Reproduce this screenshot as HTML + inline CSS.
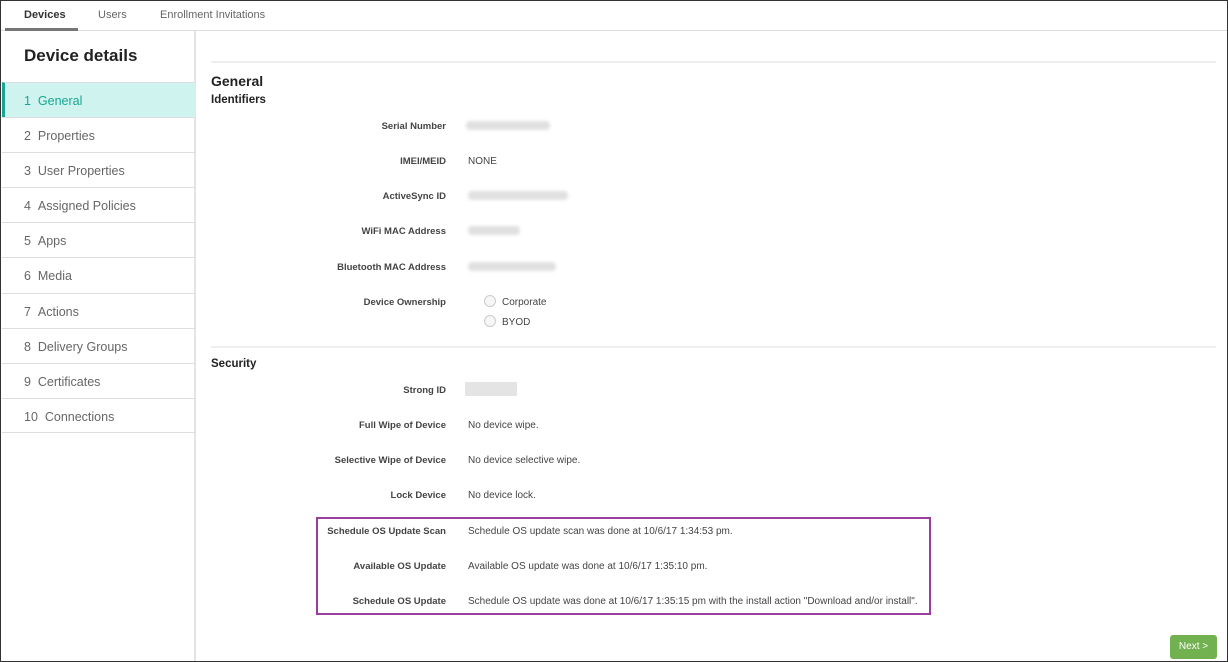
<!DOCTYPE html>
<html><head><meta charset="utf-8"><style>
*{box-sizing:border-box;margin:0;padding:0}
body{width:1228px;height:662px;overflow:hidden;font-family:"Liberation Sans",sans-serif;color:#333;background:#fff;position:relative}
.frame{position:absolute;left:0;top:0;width:1228px;height:662px;border:1px solid #333;pointer-events:none;z-index:10}
.tabs{position:absolute;left:0;top:0;width:1228px;height:31px;border-bottom:1px solid #ddd}
.tab{position:absolute;top:9px;font-size:11px;color:#666}
.tabsel{position:absolute;left:5px;top:28px;width:73px;height:3px;background:#777}
.side{position:absolute;left:0;top:31px;width:196px;height:631px;border-right:2px solid #e4e4e4}
.side h1{position:absolute;left:24px;top:15px;font-size:17px;font-weight:bold;color:#222}
.item{position:absolute;left:2px;width:194px;height:35px;border-top:1px solid #ddd;font-size:12.5px;color:#666;padding:11px 0 0 22px}
.item.sel{background:#cff3ee;color:#1aa592;border-left:3px solid #1aa592;padding-left:19px}
.hr{position:absolute;left:211px;width:1005px;height:2px;background:#eee}
.lab{position:absolute;right:782px;font-size:9.5px;font-weight:bold;color:#444;white-space:nowrap;margin-top:1px}
.val{position:absolute;left:468px;font-size:10px;color:#444;white-space:nowrap;margin-top:1px}
.blur{position:absolute;height:9px;background:#e0e0e0;border-radius:4px;filter:blur(1.5px)}
.rad{position:absolute;left:484px;width:12px;height:12px;border-radius:50%;border:1px solid #ccc;background:#f6f6f6}
.box{position:absolute;left:316px;top:517px;width:615px;height:98px;border:2px solid #9b3d9e}
.next{position:absolute;left:1170px;top:635px;width:47px;height:24px;background:#72b14f;border-radius:3px;color:#fff;font-size:10px;text-align:center;line-height:24px}
</style></head><body>
<div class="tabs">
<span class="tab" style="left:24px;color:#333;font-weight:bold">Devices</span>
<span class="tab" style="left:98px">Users</span>
<span class="tab" style="left:160px">Enrollment Invitations</span>
<div class="tabsel"></div>
</div>
<div class="side">
<h1>Device details</h1>
<div class="item sel" style="top:51px">1 &nbsp;General</div>
<div class="item" style="top:86px">2 &nbsp;Properties</div>
<div class="item" style="top:121px">3 &nbsp;User Properties</div>
<div class="item" style="top:156px">4 &nbsp;Assigned Policies</div>
<div class="item" style="top:191px">5 &nbsp;Apps</div>
<div class="item" style="top:226px">6 &nbsp;Media</div>
<div class="item" style="top:262px">7 &nbsp;Actions</div>
<div class="item" style="top:297px">8 &nbsp;Delivery Groups</div>
<div class="item" style="top:332px">9 &nbsp;Certificates</div>
<div class="item" style="top:367px;border-bottom:1px solid #ddd">10 &nbsp;Connections</div>
</div>
<div class="hr" style="top:61px"></div>
<div style="position:absolute;left:211px;top:73px;font-size:14px;font-weight:bold;color:#222">General</div>
<div style="position:absolute;left:211px;top:94px;font-size:11.5px;font-weight:bold;color:#222">Identifiers</div>
<div class="lab" style="top:120px">Serial Number</div><div class="blur" style="left:466px;top:121px;width:84px"></div>
<div class="lab" style="top:155px">IMEI/MEID</div><div class="val" style="top:155px">NONE</div>
<div class="lab" style="top:190px">ActiveSync ID</div><div class="blur" style="left:468px;top:191px;width:100px"></div>
<div class="lab" style="top:225px">WiFi MAC Address</div><div class="blur" style="left:468px;top:226px;width:52px"></div>
<div class="lab" style="top:261px">Bluetooth MAC Address</div><div class="blur" style="left:468px;top:262px;width:88px"></div>
<div class="lab" style="top:296px">Device Ownership</div>
<div class="rad" style="top:295px"></div><div class="val" style="left:502px;top:296px">Corporate</div>
<div class="rad" style="top:315px"></div><div class="val" style="left:502px;top:316px">BYOD</div>
<div class="hr" style="top:346px"></div>
<div style="position:absolute;left:211px;top:358px;font-size:11.5px;font-weight:bold;color:#222">Security</div>
<div class="lab" style="top:384px">Strong ID</div><div style="position:absolute;left:465px;top:382px;width:52px;height:14px;background:#e4e4e4"></div>
<div class="lab" style="top:419px">Full Wipe of Device</div><div class="val" style="top:419px">No device wipe.</div>
<div class="lab" style="top:454px">Selective Wipe of Device</div><div class="val" style="top:454px">No device selective wipe.</div>
<div class="lab" style="top:489px">Lock Device</div><div class="val" style="top:489px">No device lock.</div>
<div class="lab" style="top:525px">Schedule OS Update Scan</div><div class="val" style="top:525px">Schedule OS update scan was done at 10/6/17 1:34:53 pm.</div>
<div class="lab" style="top:560px">Available OS Update</div><div class="val" style="top:560px">Available OS update was done at 10/6/17 1:35:10 pm.</div>
<div class="lab" style="top:595px">Schedule OS Update</div><div class="val" style="top:595px">Schedule OS update was done at 10/6/17 1:35:15 pm with the install action "Download and/or install".</div>
<div class="box"></div>
<div class="next">Next &gt;</div>
<div class="frame"></div>
</body></html>
